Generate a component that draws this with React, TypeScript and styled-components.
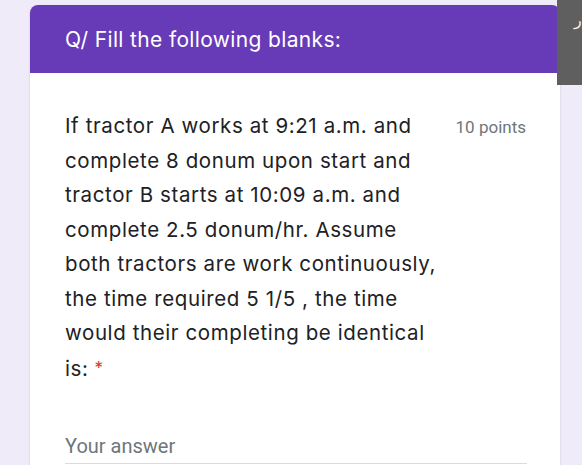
import React from 'react';
import styled, { createGlobalStyle } from 'styled-components';

const Global = createGlobalStyle`
  html, body {
    margin: 0;
    padding: 0;
    background: #f0ebf8;
    overflow: hidden;
  }
  body {
    font-family: Roboto, "Liberation Sans", sans-serif;
  }
`;

const Page = styled.div`
  position: relative;
  width: 582px;
  height: 465px;
  padding: 5px 0 0 30px;
  box-sizing: border-box;
  overflow: hidden;
`;

const Card = styled.div`
  width: 530px;
  background: #fff;
  border-radius: 8px 8px 0 0;
  box-shadow: 0 1px 2px rgba(60, 64, 67, 0.25);
  overflow: hidden;
  padding-bottom: 40px;
`;

const Header = styled.div`
  height: 68px;
  background: #673ab7;
  display: flex;
  align-items: center;
  padding: 0 35px;
  color: #fff;
  font-family: Inter, Roboto, sans-serif;
  font-size: 21px;
  letter-spacing: 0.35px;
`;

const Body = styled.div`
  padding: 36px 34px 0 35px;
`;

const Row = styled.div`
  display: flex;
  justify-content: space-between;
  align-items: flex-start;
`;

const Question = styled.div`
  font-family: Inter, Roboto, sans-serif;
  font-size: 20.5px;
  line-height: 34.5px;
  color: #202124;
  letter-spacing: 0.6px;
  white-space: nowrap;
`;

const Star = styled.span`
  color: #d93025;
  margin-left: 6px;
  font-size: 17px;
  vertical-align: 2px;
`;

const Points = styled.div`
  font-family: Roboto, sans-serif;
  font-size: 17px;
  color: #70757a;
  padding-top: 8px;
  white-space: nowrap;
`;

const Answer = styled.div`
  margin-top: 48px;
  width: 462px;
  font-family: Roboto, sans-serif;
  font-size: 20px;
  color: #70757a;
  padding-bottom: 5px;
  border-bottom: 1px solid #dadce0;
`;

const SideTab = styled.div`
  position: absolute;
  top: 0;
  right: 0;
  width: 25px;
  height: 85px;
  background: #5f5f5f;
  color: #f1f1f1;
  font-size: 16px;
  line-height: 1;
  padding: 12px 0 0 17px;
  box-sizing: border-box;
  overflow: hidden;
  font-family: "DejaVu Sans", sans-serif;
`;

const lines = [
  'If tractor A works at 9:21 a.m. and',
  'complete 8 donum upon start and',
  'tractor B starts at 10:09 a.m. and',
  'complete 2.5 donum/hr. Assume',
  'both tractors are work continuously,',
  'the time required 5 1/5 , the time',
  'would their completing be identical',
];

export default function App() {
  return (
    <>
      <Global />
      <Page>
        <Card>
          <Header>Q/ Fill the following blanks:</Header>
          <Body>
            <Row>
              <Question>
                {lines.map((l) => (
                  <div key={l}>{l}</div>
                ))}
                <div>
                  is:<Star>*</Star>
                </div>
              </Question>
              <Points>10 points</Points>
            </Row>
            <Answer>Your answer</Answer>
          </Body>
        </Card>
        <SideTab>ر</SideTab>
      </Page>
    </>
  );
}
